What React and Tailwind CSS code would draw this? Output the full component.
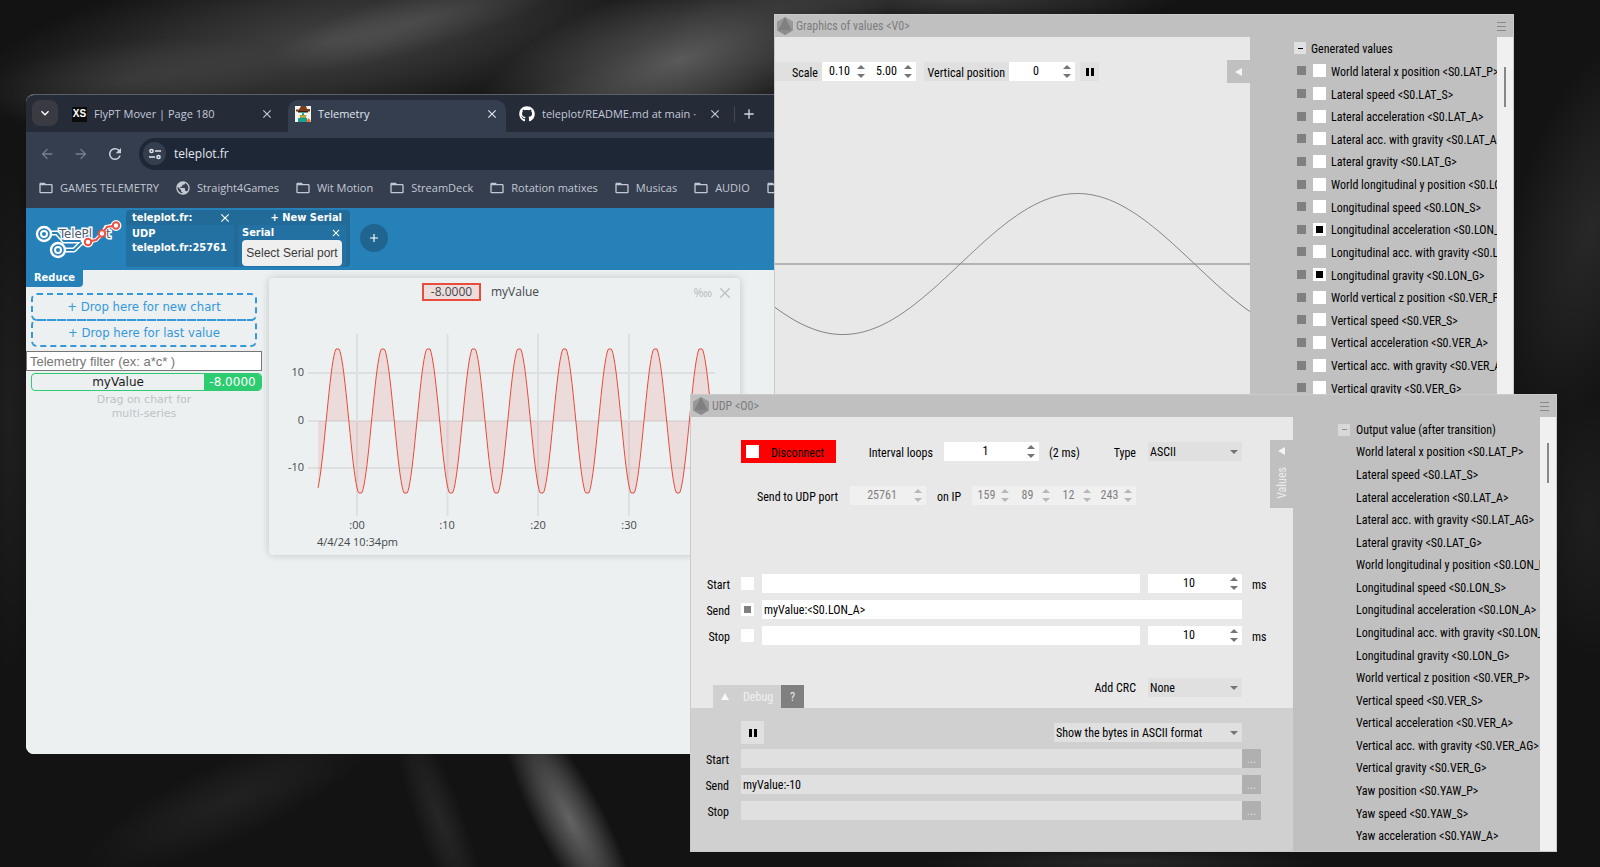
import React from 'react';
import {
  MdAdd, MdArrowBack, MdArrowForward, MdClose, MdExpandMore, MdFolderOpen, MdPublic, MdRefresh,
} from 'react-icons/md';
import { FaGithub } from 'react-icons/fa';

const uiFont = "font-['Roboto_Condensed','Liberation_Sans',sans-serif] text-[12px] leading-[14px]";
const chromeFont = "font-['Open_Sans','Noto_Sans',sans-serif] text-[11px] leading-[16px]";
const teleFont = "font-['DejaVu_Sans_Condensed','DejaVu_Sans',sans-serif]";

const generatedValues = [
  { label: 'World lateral x position <S0.LAT_P>' },
  { label: 'Lateral speed <S0.LAT_S>' },
  { label: 'Lateral acceleration <S0.LAT_A>' },
  { label: 'Lateral acc. with gravity <S0.LAT_AG>' },
  { label: 'Lateral gravity <S0.LAT_G>' },
  { label: 'World longitudinal y position <S0.LON_P>' },
  { label: 'Longitudinal speed <S0.LON_S>' },
  { label: 'Longitudinal acceleration <S0.LON_A>', checked: true },
  { label: 'Longitudinal acc. with gravity <S0.LON_AG>' },
  { label: 'Longitudinal gravity <S0.LON_G>', checked: true },
  { label: 'World vertical z position <S0.VER_P>' },
  { label: 'Vertical speed <S0.VER_S>' },
  { label: 'Vertical acceleration <S0.VER_A>' },
  { label: 'Vertical acc. with gravity <S0.VER_AG>' },
  { label: 'Vertical gravity <S0.VER_G>' },
];

const outputValues = [
  ...generatedValues.map((v) => v.label),
  'Yaw position <S0.YAW_P>',
  'Yaw speed <S0.YAW_S>',
  'Yaw acceleration <S0.YAW_A>',
];

const bookmarks = ['GAMES TELEMETRY', 'Straight4Games', 'Wit Motion', 'StreamDeck', 'Rotation matixes', 'Musicas', 'AUDIO', 'VR'];

/* ---------- Desktop wallpaper ---------- */

// [cx, cy, rx, ry, rotation, opacity]
const glows = [
  [330, 40, 360, 90, -8, 0.2],
  [680, 60, 220, 80, -18, 0.3],
  [420, 20, 160, 30, -16, 0.1],
  [130, 80, 160, 40, -6, 0.08],
  [960, 0, 220, 24, 0, 0.15],
  [1590, 230, 80, 200, 14, 0.09],
  [1590, 520, 60, 140, 0, 0.05],
  [570, 820, 130, 34, 62, 0.34],
  [440, 820, 120, 24, 70, 0.08],
  [230, 800, 160, 40, -24, 0.06],
  [10, 420, 30, 260, 0, 0.05],
  [1120, 862, 200, 14, 0, 0.08],
];

function Wallpaper() {
  return (
    <svg className="absolute inset-0 h-full w-full" viewBox="0 0 1600 867" preserveAspectRatio="none" aria-hidden="true">
      <defs>
        <radialGradient id="glow">
          <stop offset="0" stopColor="#ffffff" stopOpacity="1" />
          <stop offset="0.5" stopColor="#ffffff" stopOpacity="0.55" />
          <stop offset="1" stopColor="#ffffff" stopOpacity="0" />
        </radialGradient>
      </defs>
      <rect width="1600" height="867" fill="#131313" />
      {glows.map(([cx, cy, rx, ry, angle, opacity]) => (
        <ellipse
          key={`${cx}-${cy}`}
          cx={cx}
          cy={cy}
          rx={rx}
          ry={ry}
          fill="url(#glow)"
          opacity={opacity}
          transform={`rotate(${angle} ${cx} ${cy})`}
        />
      ))}
    </svg>
  );
}

/* ---------- Shared window controls ---------- */

function Caret({ up = false, className = '' }) {
  return (
    <svg viewBox="0 0 8 4" className={`h-1 w-2 ${className}`} aria-hidden="true">
      <path d={up ? 'M0 4L4 0L8 4Z' : 'M0 0L4 4L8 0Z'} fill="currentColor" />
    </svg>
  );
}

function Spinner({ label, value, disabled = false, className = '' }) {
  return (
    <div className={`flex h-[19px] items-center ${disabled ? 'bg-[#f0f0f0] text-[#808080]' : 'bg-white text-black'} ${className}`}>
      <input
        type="text"
        aria-label={label}
        defaultValue={value}
        disabled={disabled}
        className="h-full min-w-0 flex-1 bg-transparent pb-0.5 text-center outline-none"
      />
      <span className={`mr-1 flex flex-col gap-[5px] ${disabled ? 'text-[#b8b8b8]' : 'text-[#757575]'}`}>
        <button type="button" aria-label={`${label} up`} disabled={disabled} className="block"><Caret up className="block" /></button>
        <button type="button" aria-label={`${label} down`} disabled={disabled} className="block"><Caret className="block" /></button>
      </span>
    </div>
  );
}

function Select({ id, value, className = '' }) {
  return (
    <div className={`relative flex h-[19px] items-center ${className}`}>
      <select id={id} defaultValue={value} aria-label={value} className="h-full w-full appearance-none bg-[#e0e0e0] pl-0.5 text-black outline-none">
        <option>{value}</option>
      </select>
      <Caret className="pointer-events-none absolute right-1 text-[#757575]" />
    </div>
  );
}

function PauseButton({ className = '' }) {
  return (
    <button type="button" aria-label="Pause" className={`flex items-center justify-center gap-0.5 bg-[#e0e0e0] ${className}`}>
      <span className="h-2 w-[3px] bg-black" />
      <span className="h-2 w-[3px] bg-black" />
    </button>
  );
}

function TitleBar({ title }) {
  return (
    <div className="flex h-[22px] items-center bg-[#c0c0c0] pr-[7px] pl-0.5 text-[#7c7c7c]">
      <svg viewBox="0 0 16 18" className="mr-[3px] h-[18px] w-4" aria-hidden="true">
        <path d="M8 0L16 4.5V13.5L8 18L0 13.5V4.5Z" fill="#989898" />
        <path d="M8 0L15 13.5H1Z" fill="#808080" />
        <path d="M1 13.5H15L8 18Z" fill="#8c8c8c" />
      </svg>
      <span className="flex-1">{title}</span>
      <button type="button" aria-label="Menu" className="flex w-[9px] flex-col gap-[3px]">
        <span className="h-px bg-[#8a8a8a]" />
        <span className="h-px bg-[#8a8a8a]" />
        <span className="h-px bg-[#8a8a8a]" />
      </button>
    </div>
  );
}

function ScrollTrack({ className = '' }) {
  return (
    <div className={`flex w-4 shrink-0 justify-center bg-[#f0f0f0] ${className}`}>
      <div className="h-10 w-0.5 bg-[#888888]" />
    </div>
  );
}

/* ---------- Browser window ---------- */

function TeleplotLogo() {
  return (
    <svg viewBox="0 0 88 42" className="h-[42px] w-[88px] shrink-0" aria-label="TelePlot">
      <g fill="none" strokeLinecap="round" strokeLinejoin="round">
        <g stroke="#ffffff" strokeWidth="5">
          <path d="M17 15H23L30 23H50L56 24" />
          <path d="M31 32H40L47 25L56 24" />
        </g>
        <g stroke="#2681b9" strokeWidth="2">
          <path d="M15 15H23L30 23H46" />
          <path d="M29 32H40L47 25" />
        </g>
        <circle cx="10" cy="16" r="7" fill="#2681b9" stroke="#ffffff" strokeWidth="2.4" />
        <circle cx="10" cy="16" r="3" stroke="#ffffff" strokeWidth="2" />
        <circle cx="24" cy="32" r="7" fill="#2681b9" stroke="#ffffff" strokeWidth="2.4" />
        <circle cx="24" cy="32" r="3" stroke="#ffffff" strokeWidth="2" />
      </g>
      <g className="font-['DejaVu_Sans_Condensed','DejaVu_Sans',sans-serif]" fontSize="13" fontWeight="400" fill="#4a5c70" stroke="#ffffff" strokeWidth="3" paintOrder="stroke">
        <text x="25" y="20">TelePl</text>
        <text x="72" y="20">t</text>
      </g>
      <g fill="none" strokeLinecap="round">
        <path d="M54 24L62 22L68 16L72 9L82 7" stroke="#ffffff" strokeWidth="4" />
        <circle cx="54" cy="24" r="3.4" fill="#ffffff" stroke="#ffffff" strokeWidth="4" />
        <circle cx="82" cy="7.500" r="3.4" fill="#ffffff" stroke="#ffffff" strokeWidth="4" />
        <path d="M57 23L62 22L66 18M70 13L73 9L79 8" stroke="#ec5044" strokeWidth="2" />
        <g fill="#ffffff" stroke="#ec5044" strokeWidth="2">
          <circle cx="54" cy="24" r="3.2" />
          <circle cx="68" cy="15.500" r="3.2" />
          <circle cx="82" cy="7.500" r="3.2" />
        </g>
      </g>
    </svg>
  );
}

function PlatypusIcon() {
  return (
    <svg viewBox="0 0 16 16" className="h-4 w-4 shrink-0" aria-hidden="true">
      <rect width="16" height="16" fill="#f4f4f0" />
      <path d="M6 0H11L12 3H15V5.500H1V3.500H4Z" fill="#7a3d1e" />
      <path d="M3 5H13V6.500H3Z" fill="#3a1c10" />
      <path d="M5 6.500H11V12H5Z" fill="#1aa89c" />
      <path d="M5 7H7V9H5ZM9 7H11V9H9Z" fill="#ffffff" />
      <path d="M4 9.500H12L10.500 11.500H5.500Z" fill="#f0a21c" />
      <path d="M3 12H12V16H3Z" fill="#1d9e92" />
      <path d="M13 12L15.500 14V16H11.500Z" fill="#e8762c" />
    </svg>
  );
}

function BrowserTab({ icon, title, active = false, className = '' }) {
  return (
    <div className={`flex items-center ${active ? 'rounded-t-[10px] bg-[#343e4f] text-[#e3e7f0]' : 'text-[#c3cad8]'} ${className}`}>
      {icon}
      <span className="ml-[7px] min-w-0 flex-1 whitespace-nowrap">{title}</span>
      <button type="button" aria-label={`Close ${title}`}><MdClose className="h-3.5 w-3.5" /></button>
    </div>
  );
}

function TelemetryChart() {
  const points = [];
  for (let x = 0; x <= 400; x += 1) {
    const y = -74 * Math.cos(((x - 19.5) * 2 * Math.PI) / 45.4);
    points.push(`${x + 49},${(Math.max(-72, Math.min(72, y)) + 143).toFixed(1)}`);
  }
  const line = points.join(' ');
  return (
    <svg viewBox="0 0 471 277" className={`absolute inset-0 h-full w-full ${chromeFont}`} role="img" aria-label="myValue chart">
      <g stroke="#dce0e1" strokeWidth="2">
        <path d="M88 56V238M178.500 56V238M269 56V238M360 56V238" />
        <path d="M39 95H446M39 143H446M39 190H446" />
      </g>
      <polygon points={`49,143 ${line} 449,143`} fill="#e74c3c" fillOpacity="0.12" />
      <polyline points={line} fill="none" stroke="#e74c3c" strokeWidth="1" />
      <g fill="#44484c" textAnchor="end">
        <text x="35" y="98">10</text>
        <text x="35" y="146">0</text>
        <text x="35" y="193">-10</text>
      </g>
      <g fill="#44484c" textAnchor="middle">
        <text x="88" y="251">:00</text>
        <text x="178" y="251">:10</text>
        <text x="269" y="251">:20</text>
        <text x="360" y="251">:30</text>
      </g>
      <text x="48" y="268" fill="#44484c">4/4/24 10:34pm</text>
    </svg>
  );
}

function BrowserWindow() {
  return (
    <div className={`absolute top-[94px] left-[26px] w-[900px] overflow-hidden rounded-lg border-t border-[#5a5f68] bg-[#ecf0f1] ${chromeFont}`}>
      {/* Tab strip */}
      <div className="flex h-[37px] items-end bg-[#262b38]">
        <button type="button" aria-label="Search tabs" className="mb-1.5 ml-1.5 flex h-[26px] w-[26px] items-center justify-center rounded-lg bg-[#3a3b42] text-white">
          <MdExpandMore className="h-4 w-4" />
        </button>
        <BrowserTab
          title="FlyPT Mover | Page 180"
          icon={<span className="flex h-[15px] w-[15px] items-center justify-center bg-[#0c0c0c] font-['Liberation_Sans',sans-serif] text-[10px] font-bold text-white">XS</span>}
          className="ml-3.5 h-[32px] w-[216px] pr-[14px] pb-1"
        />
        <BrowserTab active title="Telemetry" icon={<PlatypusIcon />} className="h-[32px] w-[218px] px-[7px] pb-1" />
        <BrowserTab
          title="teleplot/README.md at main ·"
          icon={<FaGithub className="h-4 w-4 shrink-0 text-white" />}
          className="h-[32px] w-[216px] pl-[13px] pb-1"
        />
        <span className="mb-2.5 ml-3 h-4 w-px bg-[#434854]" />
        <button type="button" aria-label="New tab" className="mb-2.5 ml-1.5 text-[#d3d8e2]"><MdAdd className="h-4 w-4" /></button>
      </div>

      {/* Toolbar */}
      <div className="flex h-[39px] items-center bg-[#343e4f] pt-1 text-[#c9cfdb]">
        <button type="button" aria-label="Back" className="ml-[13px] text-[#77808f]"><MdArrowBack className="h-4 w-4" /></button>
        <button type="button" aria-label="Forward" className="ml-[18px] text-[#77808f]"><MdArrowForward className="h-4 w-4" /></button>
        <button type="button" aria-label="Reload" className="ml-[17px]"><MdRefresh className="h-[18px] w-[18px]" /></button>
        <div className="ml-[15px] flex h-8 flex-1 items-center rounded-full bg-[#1e2736] pl-1">
          <span className="flex h-[23px] w-[23px] items-center justify-center rounded-full bg-[#343e4f]">
            <svg viewBox="0 0 12 12" className="h-3 w-3" fill="none" stroke="#e3e7f0" strokeWidth="1.500" aria-hidden="true">
              <circle cx="2.500" cy="3" r="1.600" />
              <path d="M6 3H12M0 9H6" />
              <circle cx="9.500" cy="9" r="1.600" />
            </svg>
          </span>
          <input aria-label="Address" defaultValue="teleplot.fr" className="ml-2 flex-1 bg-transparent text-[12px] text-[#e3e7f0] outline-none" />
        </div>
      </div>

      {/* Bookmarks */}
      <div className="flex h-[37px] items-center gap-4 overflow-hidden bg-[#343e4f] pb-1 pl-3 whitespace-nowrap text-[#c3c8d2]">
        {bookmarks.map((name) => (
          <a key={name} href="#" className="flex shrink-0 items-center gap-1.5">
            {name === 'Straight4Games' ? <MdPublic className="h-4 w-4" /> : <MdFolderOpen className="h-4 w-4" />}
            {name}
          </a>
        ))}
      </div>

      {/* Teleplot header */}
      <div className={`flex h-[62px] items-start bg-[#2681b9] pl-2 text-[11px] leading-[14px] font-bold text-white ${teleFont}`}>
        <div className="pt-2.5"><TeleplotLogo /></div>
        <div className="mt-0.5 ml-1 flex h-[57px] gap-1 rounded bg-[#226a98] pr-1">
          <div className="flex w-[108px] flex-col">
            <div className="flex h-[15px] items-center justify-between pr-0.5 pl-1.5">
              teleplot.fr:
              <button type="button" aria-label="Close connection"><MdClose className="h-3.5 w-3.5" /></button>
            </div>
            <div className="flex-1 bg-[#2371a3] pt-0.5 pl-1.5">
              <p>UDP</p>
              <p>teleplot.fr:25761</p>
            </div>
          </div>
          <div className="flex w-[108px] flex-col">
            <button type="button" className="h-[15px] pr-1 text-right">+ New Serial</button>
            <div className="flex-1 bg-[#2371a3] px-1 pt-px">
              <div className="flex h-3.5 items-center justify-between">
                Serial
                <button type="button" aria-label="Close serial"><MdClose className="h-3 w-3" /></button>
              </div>
              <button type="button" className="h-[26px] w-full rounded-sm bg-[#efefef] font-['Liberation_Sans',sans-serif] text-[12px] font-normal whitespace-nowrap text-[#3a3a3a]">
                Select Serial port
              </button>
            </div>
          </div>
        </div>
        <button type="button" aria-label="Add connection" className="mt-4 ml-2.5 flex h-7 w-7 items-center justify-center rounded-full bg-[#1f6590]">
          <MdAdd className="h-3.5 w-3.5" />
        </button>
      </div>

      {/* Teleplot content */}
      <div className={`flex items-start bg-[#ecf0f1] ${teleFont}`}>
        <div className="w-[236px] pb-[333px]">
          <button type="button" className="block h-[17px] rounded-br bg-[#2681b9] px-2 pb-0.5 text-[11px] leading-[14px] font-bold text-white">Reduce</button>
          <div className="mt-1.5 ml-[5px] w-[226px] text-center text-[13px] leading-6 text-[#3498db]">
            <div className="h-7 rounded-md border-2 border-dashed border-[#3498db]">+ Drop here for new chart</div>
            <div className="-mt-0.5 h-7 rounded-md border-2 border-dashed border-[#3498db]">+ Drop here for last value</div>
          </div>
          <input
            type="text"
            aria-label="Telemetry filter"
            placeholder="Telemetry filter (ex: a*c* )"
            className="mt-1 block h-5 w-full border border-[#767676] bg-white px-[3px] font-['Liberation_Sans',sans-serif] text-[13px] outline-none placeholder:text-[#757575]"
          />
          <div className="mt-0.5 ml-[5px] flex h-[18px] overflow-hidden rounded border border-[#2ecc71] text-center font-['DejaVu_Sans',sans-serif] text-[12px] leading-4 text-[#1c1c1c]">
            <span className="flex-1">myValue</span>
            <span className="w-[57px] bg-[#2ecc71] text-white">-8.0000</span>
          </div>
          <p className="mt-0.5 text-center font-['DejaVu_Sans',sans-serif] text-[11px] leading-[14px] text-[#bdc3c7]">
            Drag on chart for
            <br />
            multi-series
          </p>
        </div>
        <div className={`relative mt-2 ml-[7px] h-[277px] w-[471px] rounded-sm bg-[#ecf0f1] shadow-[0_0_8px_rgba(0,0,0,0.18)] ${chromeFont}`}>
          <TelemetryChart />
          <div className="relative flex items-center justify-center pt-[5px] text-[12px] text-[#44484c]">
            <span className="h-[18px] w-[59px] border-2 border-[#e74c3c] bg-[#eedddd] text-center leading-[14px]">-8.0000</span>
            <span className="mr-[48px] ml-2.5">myValue</span>
            <div className="absolute top-1.5 right-1.5 flex items-center gap-1 text-[#bdc3c7]">
              <span>‱</span>
              <button type="button" aria-label="Remove chart"><MdClose className="h-[18px] w-[18px]" /></button>
            </div>
          </div>
        </div>
      </div>
    </div>
  );
}

/* ---------- Graphics window ---------- */

function GraphicsWindow() {
  const points = [];
  for (let x = 0; x <= 476; x += 2) {
    points.push(`${x},${(181 - 70.5 * Math.cos(((x - 303) * Math.PI) / 235)).toFixed(1)}`);
  }
  return (
    <div className={`absolute top-[14px] left-[774px] w-[740px] border border-[#cacaca] bg-[#e8e8e8] text-black ${uiFont}`}>
      <TitleBar title="Graphics of values <V0>" />
      <div className="flex">
        <div className="flex min-w-0 flex-1 flex-col pt-[23px]">
          <div className="flex h-[23px] items-center">
            <span className="flex h-[19px] w-[47px] items-center justify-end bg-[#e0e0e0] pt-0.5 pr-1">Scale</span>
            <Spinner label="Scale time" value="0.10" className="w-[47px]" />
            <Spinner label="Scale value" value="5.00" className="w-[47px]" />
            <span className="ml-2 flex h-[19px] w-[85px] items-center justify-end bg-[#e0e0e0] pt-0.5 pr-1 whitespace-nowrap">Vertical position</span>
            <Spinner label="Vertical position" value="0" className="w-[66px]" />
            <PauseButton className="ml-[5px] h-[19px] w-[19px]" />
            <button type="button" aria-label="Collapse values" className="ml-auto flex h-[23px] w-[23px] items-center justify-center bg-[#c0c0c0]">
              <svg viewBox="0 0 7 8" className="h-2 w-[7px]" aria-hidden="true"><path d="M7 0V8L0 4Z" fill="#f4f4f4" /></svg>
            </button>
          </div>
          <svg viewBox="0 0 476 316" preserveAspectRatio="none" className="h-[316px] w-full" aria-label="Values graph">
            <path d="M0 181H476" stroke="#808080" />
            <polyline points={points.join(' ')} fill="none" stroke="#808080" />
          </svg>
        </div>
        <div className="flex w-[263px] bg-[#c0c0c0]">
          <ul className="flex min-w-0 flex-1 flex-col overflow-hidden pl-[44px] whitespace-nowrap">
            <li className="flex flex-1 items-center">
              <button type="button" aria-label="Collapse group" className="flex h-3 w-3 items-center justify-center bg-[#e0e0e0]"><span className="h-px w-[5px] bg-black" /></button>
              <span className="ml-[5px] pt-0.5">Generated values</span>
            </li>
            {generatedValues.map((v) => (
              <li key={v.label} className="flex flex-1 items-center pl-[3px]">
                <span className="h-[9px] w-[9px] shrink-0 bg-[#808080]" />
                <label className="ml-[7px] flex shrink-0 items-center">
                  <input
                    type="checkbox"
                    defaultChecked={v.checked}
                    className="h-[13px] w-[13px] shrink-0 appearance-none bg-white checked:bg-black checked:shadow-[inset_0_0_0_3px_#ffffff]"
                  />
                  <span className="ml-[5px] pt-0.5">{v.label}</span>
                </label>
              </li>
            ))}
          </ul>
          <ScrollTrack className="pt-[30px]" />
        </div>
      </div>
    </div>
  );
}

/* ---------- UDP window ---------- */

function MessageRow({ label, value, checked, delay }) {
  const id = `msg-${label}`;
  return (
    <div className="flex h-[19px] items-center">
      <label htmlFor={id} className="w-[50px] pt-0.5 pr-[11px] text-right">{label}</label>
      <input
        type="checkbox"
        aria-label={`${label} enabled`}
        defaultChecked={checked}
        className="h-[13px] w-[13px] appearance-none bg-white checked:bg-[#808080] checked:shadow-[inset_0_0_0_3px_#ffffff]"
      />
      <input id={id} type="text" defaultValue={value} className="ml-2 h-full min-w-0 flex-1 bg-white px-0.5 outline-none" />
      {delay && <Spinner label={`${label} delay`} value={delay} className="ml-2 w-[94px]" />}
      <span className="w-[51px] pt-0.5 pl-2.5">{delay ? 'ms' : ''}</span>
    </div>
  );
}

function DebugRow({ label, value }) {
  const id = `debug-${label}`;
  return (
    <div className="flex h-[19px] items-center pr-8">
      <label htmlFor={id} className="w-[50px] pt-0.5 pr-3 text-right">{label}</label>
      <input id={id} type="text" readOnly value={value} className="h-full min-w-0 flex-1 bg-[#e0e0e0] px-0.5 outline-none" />
      <button type="button" aria-label={`${label} details`} className="h-full w-[19px] bg-[#b0b0b0] text-[#dddddd]">...</button>
    </div>
  );
}

function UdpWindow() {
  return (
    <div className={`absolute top-[394px] left-[690px] w-[867px] border border-[#cacaca] bg-[#e8e8e8] text-black ${uiFont}`}>
      <TitleBar title="UDP <O0>" />
      <div className="flex">
        <div className="relative min-w-0 flex-1 pt-[23px]">
          <div className="flex h-[23px] items-center pr-[51px] pl-[50px]">
            <button type="button" className="flex h-[23px] w-[95px] items-center bg-[#ff0000] pl-[5px]">
              <span className="h-[13px] w-[13px] bg-white" />
              <span className="flex-1 pt-0.5 text-center">Disconnect</span>
            </button>
            <span className="w-[108px] pt-0.5 pr-[11px] text-right">Interval loops</span>
            <Spinner label="Interval loops" value="1" className="w-[95px]" />
            <span className="pt-0.5 pl-2.5">(2 ms)</span>
            <label htmlFor="type" className="ml-auto pt-0.5 pr-3">Type</label>
            <Select id="type" value="ASCII" className="w-[94px]" />
          </div>

          <div className="mt-[23px] flex h-[19px] items-center pl-[50px]">
            <span className="w-[109px] pt-0.5 pr-3 text-right">Send to UDP port</span>
            <Spinner label="UDP port" value="25761" disabled className="w-[76px]" />
            <span className="w-[46px] pt-0.5 text-center">on IP</span>
            {['159', '89', '12', '243'].map((n) => (
              <Spinner key={n} label={`IP ${n}`} value={n} disabled className="w-[41px]" />
            ))}
          </div>

          <div className="mt-[69px] flex flex-col gap-[7px]">
            <MessageRow label="Start" value="" delay="10" />
            <MessageRow label="Send" value="myValue:<S0.LON_A>" checked />
            <MessageRow label="Stop" value="" delay="10" />
          </div>

          <div className="mt-[33px] flex h-[30px] pr-[51px] pl-[22px]">
            <button type="button" className="flex h-[23px] w-[68px] items-center self-end bg-[#d0d0d0] pl-2 text-[#f0f0f0]">
              <svg viewBox="0 0 8 7" className="h-[7px] w-2" aria-hidden="true"><path d="M4 0L8 7H0Z" fill="#f8f8f8" /></svg>
              <span className="ml-3.5">Debug</span>
            </button>
            <button type="button" className="h-[23px] w-[23px] self-end bg-[#808080] text-[#e8e8e8]">?</button>
            <label htmlFor="crc" className="ml-auto pt-[3px] pr-3">Add CRC</label>
            <Select id="crc" value="None" className="w-[94px]" />
          </div>

          <div className="bg-[#d0d0d0] pt-[13px] pb-[31px]">
            <div className="mb-[5px] flex items-center justify-between pr-[51px] pl-[50px]">
              <PauseButton className="h-[23px] w-[23px]" />
              <Select id="format" value="Show the bytes in ASCII format" className="w-[188px]" />
            </div>
            <div className="flex flex-col gap-[7px]">
              <DebugRow label="Start" value="" />
              <DebugRow label="Send" value="myValue:-10" />
              <DebugRow label="Stop" value="" />
            </div>
          </div>

          <button type="button" className="absolute top-[23px] right-0 flex h-[68px] w-[23px] flex-col items-center bg-[#c0c0c0] pt-[7px] text-[#ececec]">
            <svg viewBox="0 0 7 8" className="h-2 w-[7px]" aria-hidden="true"><path d="M7 0V8L0 4Z" fill="#f4f4f4" /></svg>
            <span className="mt-3 rotate-180 [writing-mode:vertical-rl]">Values</span>
          </button>
        </div>

        <div className="flex w-[263px] bg-[#c0c0c0]">
          <ul className="flex min-w-0 flex-1 flex-col overflow-hidden pt-0.5 pb-1 pl-[45px] whitespace-nowrap">
            <li className="flex flex-1 items-center">
              <button type="button" aria-label="Collapse group" className="flex h-3 w-3 items-center justify-center bg-[#d8d8d8]"><span className="h-px w-[5px] bg-[#909090]" /></button>
              <span className="ml-1.5">Output value (after transition)</span>
            </li>
            {outputValues.map((label) => (
              <li key={label} className="flex flex-1 items-center pt-px pl-[18px]">{label}</li>
            ))}
          </ul>
          <ScrollTrack className="pt-[26px]" />
        </div>
      </div>
    </div>
  );
}

export default function App() {
  return (
    <main className="relative min-h-screen w-full overflow-hidden bg-[#131313]">
      <Wallpaper />
      <BrowserWindow />
      <GraphicsWindow />
      <UdpWindow />
    </main>
  );
}
